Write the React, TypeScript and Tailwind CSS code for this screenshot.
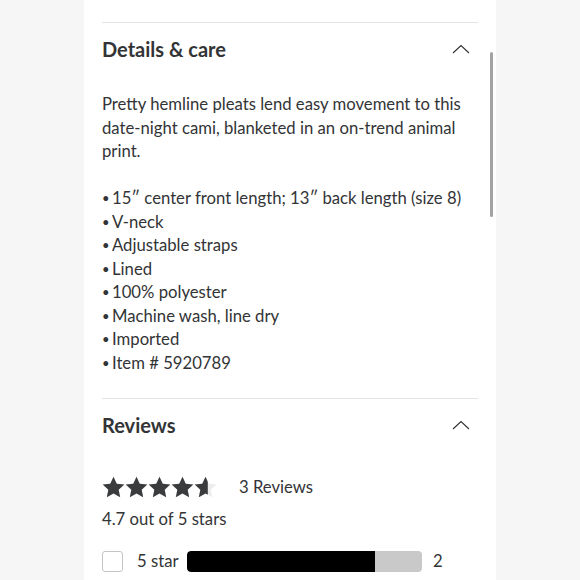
import React from "react";

const bullets = [
  "15\u2033 center front length; 13\u2033 back length (size 8)",
  "V-neck",
  "Adjustable straps",
  "Lined",
  "100% polyester",
  "Machine wash, line dry",
  "Imported",
  "Item # 5920789",
];

function Chevron() {
  return (
    <svg width="18" height="10" viewBox="0 0 18 10" fill="none" className="mr-[8px]">
      <path d="M1 9L9 1.5L17 9" stroke="#2e2f32" strokeWidth="1.1" />
    </svg>
  );
}

const STAR = "M12 0.8l3.4 7.2 7.9.9-5.9 5.4 1.6 7.8L12 18.2l-7 3.9 1.6-7.8L.7 8.9l7.9-.9z";

function Stars({ value }: { value: number }) {
  return (
    <div className="flex">
      {[0, 1, 2, 3, 4].map((i) => {
        const fill = Math.max(0, Math.min(1, value - i));
        return (
          <svg key={i} width="23" height="23" viewBox="0 0 24 24">
            <defs>
              <clipPath id={`c${i}`}>
                <rect x="0" y="0" width={24 * fill} height="24" />
              </clipPath>
            </defs>
            <path d={STAR} fill="#ececec" />
            <path d={STAR} fill="#3a3b3d" clipPath={`url(#c${i})`} />
          </svg>
        );
      })}
    </div>
  );
}

function Heading({ title }: { title: string }) {
  return (
    <div className="flex items-center justify-between">
      <h2 className="text-[20px] leading-[28px] font-bold">{title}</h2>
      <Chevron />
    </div>
  );
}

export default function App() {
  return (
    <div
      className="h-[580px] overflow-hidden bg-[#f6f6f6] text-[#333436]"
      style={{ fontFamily: "Lato, 'Noto Sans', sans-serif" }}
    >
      <div className="relative ml-[84px] h-full w-[412px] bg-white px-[18px] pt-[22px]">
        <div className="absolute right-[3px] top-[52px] h-[165px] w-[3px] rounded-full bg-[#a3a3a3]" />

        <section className="border-t border-[#e3e4e5] pt-[12px] pb-[23px]">
          <Heading title="Details & care" />
          <div className="mt-[30px] text-[16.7px] leading-[23.5px]">
            <p>
              Pretty hemline pleats lend easy movement to this date-night cami, blanketed in an on-trend animal
              print.
            </p>
            <ul className="mt-[23.5px]">
              {bullets.map((b) => (
                <li key={b} className="flex">
                  <span className="w-[10px] text-[13px]">{"\u2022"}</span>
                  {b}
                </li>
              ))}
            </ul>
          </div>
        </section>

        <section className="border-t border-[#e3e4e5] pt-[12px]">
          <Heading title="Reviews" />
          <div className="mt-[36px] flex items-center gap-[22px]">
            <Stars value={4.6} />
            <span className="text-[16.7px]">3 Reviews</span>
          </div>
          <div className="mt-[8px] text-[16.7px] leading-[23px]">4.7 out of 5 stars</div>
          <div className="mt-[18px] flex items-center">
            <div className="h-[21px] w-[21px] rounded-[3px] border border-[#c4c4c4]" />
            <span className="ml-[14px] w-[50px] text-[16.7px]">5 star</span>
            <div className="h-[21px] w-[235px] overflow-hidden rounded-[4px] bg-[#c9c9c9]">
              <div className="h-full w-[80%] rounded-l-[4px] bg-black" />
            </div>
            <span className="ml-[11px] text-[16.7px]">2</span>
          </div>
        </section>
      </div>
    </div>
  );
}
